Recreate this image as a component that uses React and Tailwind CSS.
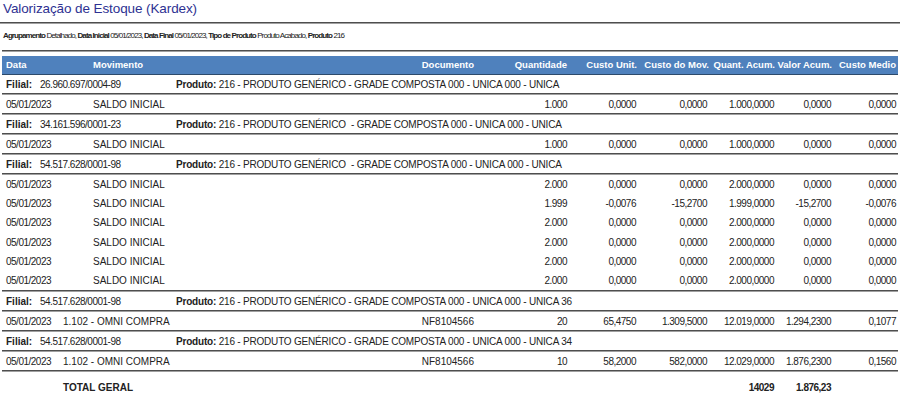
import React from 'react';

const font = { fontFamily: '"Liberation Sans", Arial, sans-serif' };

const groups = [
  {
    filial: '26.960.697/0004-89',
    produto: '216 - PRODUTO GENÉRICO - GRADE COMPOSTA 000 - UNICA 000 - UNICA',
    rows: [['05/01/2023', 'SALDO INICIAL', '', '1.000', '0,0000', '0,0000', '1.000,0000', '0,0000', '0,0000']],
  },
  {
    filial: '34.161.596/0001-23',
    produto: '216 - PRODUTO GENÉRICO  - GRADE COMPOSTA 000 - UNICA 000 - UNICA',
    rows: [['05/01/2023', 'SALDO INICIAL', '', '1.000', '0,0000', '0,0000', '1.000,0000', '0,0000', '0,0000']],
  },
  {
    filial: '54.517.628/0001-98',
    produto: '216 - PRODUTO GENÉRICO  - GRADE COMPOSTA 000 - UNICA 000 - UNICA',
    rows: [
      ['05/01/2023', 'SALDO INICIAL', '', '2.000', '0,0000', '0,0000', '2.000,0000', '0,0000', '0,0000'],
      ['05/01/2023', 'SALDO INICIAL', '', '1.999', '-0,0076', '-15,2700', '1.999,0000', '-15,2700', '-0,0076'],
      ['05/01/2023', 'SALDO INICIAL', '', '2.000', '0,0000', '0,0000', '2.000,0000', '0,0000', '0,0000'],
      ['05/01/2023', 'SALDO INICIAL', '', '2.000', '0,0000', '0,0000', '2.000,0000', '0,0000', '0,0000'],
      ['05/01/2023', 'SALDO INICIAL', '', '2.000', '0,0000', '0,0000', '2.000,0000', '0,0000', '0,0000'],
      ['05/01/2023', 'SALDO INICIAL', '', '2.000', '0,0000', '0,0000', '2.000,0000', '0,0000', '0,0000'],
    ],
  },
  {
    filial: '54.517.628/0001-98',
    produto: '216 - PRODUTO GENÉRICO - GRADE COMPOSTA 000 - UNICA 000 - UNICA 36',
    compra: true,
    rows: [['05/01/2023', '1.102 - OMNI COMPRA', 'NF8104566', '20', '65,4750', '1.309,5000', '12.019,0000', '1.294,2300', '0,1077']],
  },
  {
    filial: '54.517.628/0001-98',
    produto: '216 - PRODUTO GENÉRICO - GRADE COMPOSTA 000 - UNICA 000 - UNICA 34',
    compra: true,
    rows: [['05/01/2023', '1.102 - OMNI COMPRA', 'NF8104566', '10', '58,2000', '582,0000', '12.029,0000', '1.876,2300', '0,1560']],
  },
];

// double rule used between report bands
const Sep = () => (
  <div>
    <div className="h-[1px] bg-[#4e4e4e]" />
    <div className="h-[1px] bg-[#a0a0a0]" />
  </div>
);

const Nums = ({ values, bold }) => (
  <>
    <div className="w-[93px] text-right tracking-[-0.5px]">{values[0]}</div>
    <div className="w-[69px] text-right tracking-[-0.5px]">{values[1]}</div>
    <div className="w-[71px] text-right tracking-[-0.5px]">{values[2]}</div>
    <div className={`w-[67px] text-right tracking-[-0.5px] ${bold ? 'font-bold' : ''}`}>{values[3]}</div>
    <div className={`w-[57px] text-right tracking-[-0.5px] ${bold ? 'font-bold' : ''}`}>{values[4]}</div>
    <div className="w-[65px] text-right tracking-[-0.5px]">{values[5]}</div>
  </>
);

const DataRow = ({ row, compra, tall }) => (
  <div className={`flex items-center ${tall ? 'h-[19.2px]' : 'h-[18px]'} text-[10px] text-[#222]`}>
    {compra ? (
      <>
        <div className="w-[61px] pl-[4px] tracking-[-0.5px]">{row[0]}</div>
        <div className="w-[317px]">{row[1]}</div>
      </>
    ) : (
      <>
        <div className="w-[91px] pl-[4px] tracking-[-0.5px]">{row[0]}</div>
        <div className="w-[287px]">{row[1]}</div>
      </>
    )}
    <div className="w-[94px] text-right">{row[2]}</div>
    <Nums values={row.slice(3)} />
  </div>
);

const FilialRow = ({ filial, produto }) => (
  <div className="flex items-center h-[18px] text-[10px] text-[#222]">
    <div className="w-[38px] pl-[4px] font-bold">Filial:</div>
    <div className="w-[136px] tracking-[-0.5px]">{filial}</div>
    <div className="whitespace-pre tracking-[-0.2px]">
      <span className="font-bold">Produto:</span> {produto}
    </div>
  </div>
);

export default function App() {
  return (
    <div className="w-[900px] h-[394px] bg-white overflow-hidden" style={font}>
      <div className="h-[22px] pl-[3px] pt-[1px] text-[13.5px] leading-[16px] text-[#2e3192] tracking-[-0.1px]">
        Valorização de Estoque (Kardex)
      </div>
      <Sep />
      <div className="h-[26px] pl-[3px] pt-[7px] text-[8px] leading-[10px] text-[#222] tracking-[-0.9px] whitespace-pre">
        <span className="font-bold">Agrupamento</span> Detalhado, <span className="font-bold">Data Inicial</span> 05/01/2023, <span className="font-bold">Data Final</span> 05/01/2023, <span className="font-bold">Tipo de Produto</span> Produto Acabado, <span className="font-bold">Produto</span> 216
      </div>
      <div className="mx-[2px]">
        <Sep />
        <div className="mt-[4px] flex items-center h-[19px] bg-[#4f81bd] border-b border-[#2d4a6b] text-[9.5px] font-bold text-white">
          <div className="w-[91px] pl-[4px]">Data</div>
          <div className="w-[287px]">Movimento</div>
          <div className="w-[94px] text-right">Documento</div>
          <div className="w-[93px] text-right">Quantidade</div>
          <div className="w-[70px] text-right">Custo Unit.</div>
          <div className="w-[72px] text-right">Custo do Mov.</div>
          <div className="w-[66px] text-right">Quant. Acum.</div>
          <div className="w-[57px] text-right">Valor Acum.</div>
          <div className="w-[64px] text-right">Custo Medio</div>
        </div>
        {groups.map((g, i) => (
          <div key={i}>
            <FilialRow filial={g.filial} produto={g.produto} />
            <Sep />
            {g.rows.map((r, j) => (
              <DataRow key={j} row={r} compra={g.compra} tall={g.rows.length > 1} />
            ))}
            <Sep />
          </div>
        ))}
        <div className="flex items-center h-[18px] mt-[6px] text-[10px] font-bold text-[#222]">
          <div className="w-[378px] pl-[61px]">TOTAL GERAL</div>
          <div className="w-[94px]" />
          <Nums values={['', '', '', '14029', '1.876,23', '']} bold />
        </div>
      </div>
    </div>
  );
}
